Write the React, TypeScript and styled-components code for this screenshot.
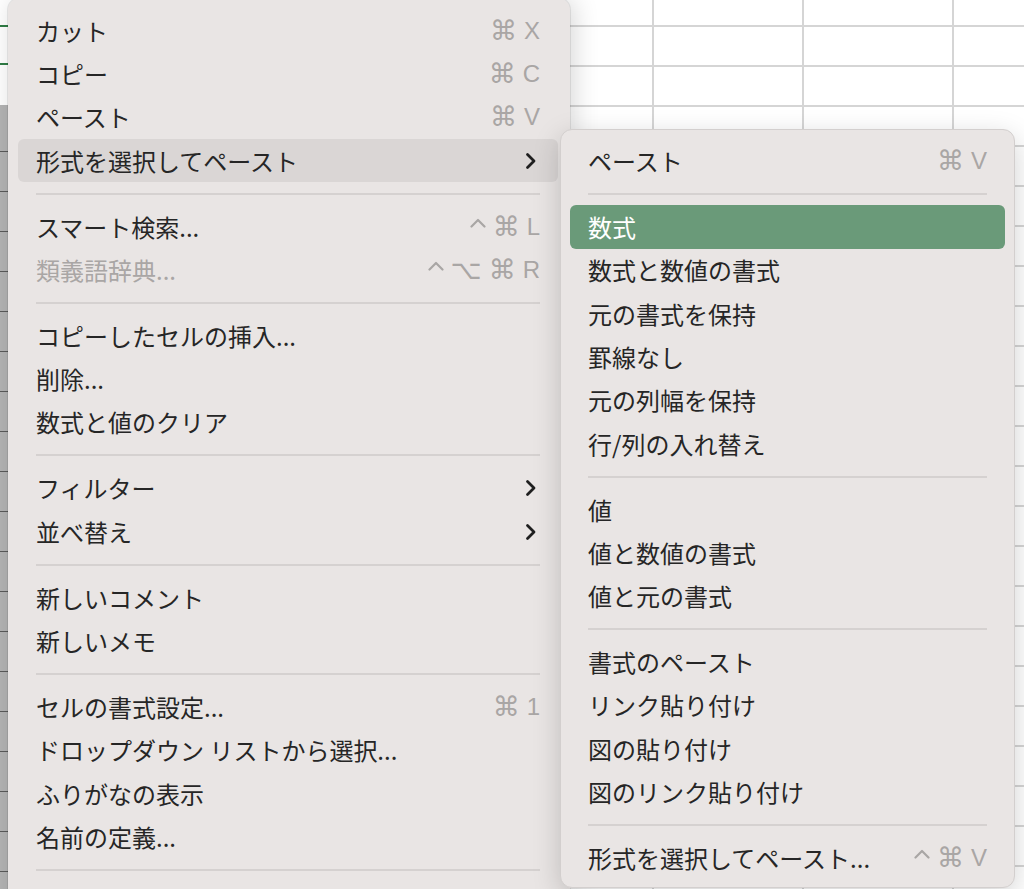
import styled, { createGlobalStyle } from "styled-components";

const GlobalStyle = createGlobalStyle`
  html, body {
    margin: 0;
    padding: 0;
    overflow: hidden;
    background: #ffffff;
  }
`;

const Page = styled.div`
  position: relative;
  width: 1024px;
  height: 889px;
  overflow: hidden;
  font-family: "Noto Sans CJK JP", "Noto Sans", sans-serif;
`;

const Sheet = styled.div`
  display: flex;
  width: 100%;
  height: 100%;
`;

const LeftColumn = styled.div`
  width: 8px;
  flex: none;
  display: flex;
  flex-direction: column;
`;

const LeftTop = styled.div`
  height: 105px;
  background:
    linear-gradient(#ffffff 0 25px, #2f7d45 25px 27px, #ffffff 27px 63px, #2f7d45 63px 65px, #ffffff 65px);
`;

const LeftBody = styled.div`
  flex: 1;
  background-color: #b4b4b4;
  background-image: repeating-linear-gradient(
    to bottom,
    transparent 0 38px,
    #5a5a5a 38px 39px,
    transparent 39px 40px
  );
  background-position: 0 8px;
`;

const Grid = styled.div`
  flex: 1;
  background-color: #ffffff;
  background-image:
    linear-gradient(to right, #d5d5d5 0 2px, transparent 2px),
    linear-gradient(to bottom, #d5d5d5 0 2px, transparent 2px);
  background-size: 150px 100%, 100% 40px;
  background-position: 644px 0, 0 25px;
`;

const Menu = styled.div`
  position: absolute;
  left: 8px;
  top: -2px;
  width: 562px;
  height: 920px;
  box-sizing: border-box;
  padding: 11px 12px 0 10px;
  background: #e9e5e4;
  border-radius: 12px;
  box-shadow: 0 0 0 1px rgba(0, 0, 0, 0.08), 4px 0 26px rgba(0, 0, 0, 0.16);
`;

const SubMenu = styled.div`
  position: absolute;
  left: 560px;
  top: 129px;
  width: 455px;
  box-sizing: border-box;
  padding: 9.5px 9px 7px 9px;
  background: #e9e5e4;
  border-radius: 12px;
  border: 1px solid #d3cfce;
  box-shadow: 0 8px 28px rgba(0, 0, 0, 0.18);
`;

type Tone = "none" | "gray" | "green";

const Row = styled.div<{ $tone: Tone; $disabled?: boolean }>`
  display: flex;
  align-items: center;
  justify-content: space-between;
  height: 43.3px;
  padding: 0 18px;
  border-radius: 6px;
  font-size: 24px;
  line-height: 1;
  color: ${(p) =>
    p.$tone === "green" ? "#ffffff" : p.$disabled ? "#a9a6a5" : "#262626"};
  background: ${(p) =>
    p.$tone === "green" ? "#6a9a79" : p.$tone === "gray" ? "#dad6d5" : "transparent"};
`;

const Label = styled.span`
  white-space: nowrap;
`;

const Keys = styled.span`
  display: flex;
  align-items: center;
  gap: 7px;
  height: 28px;
  color: #a9a6a5;
`;

const Key = styled.span<{ $symbol?: boolean }>`
  font-family: ${(p) => (p.$symbol ? '"DejaVu Sans", sans-serif' : '"Liberation Sans", sans-serif')};
  font-size: ${(p) => (p.$symbol ? "27px" : "24px")};
  line-height: 28px;
`;

const CaretIcon = styled.svg`
  align-self: flex-start;
  margin-top: 5px;
`;

const Separator = styled.div`
  height: 22.7px;
  display: flex;
  align-items: center;
  padding: 0 18px;
  &::after {
    content: "";
    flex: 1;
    height: 2px;
    background: #d5d1d0;
  }
`;

const Chevron = () => (
  <svg width="14" height="20" viewBox="0 0 14 20" style={{ marginRight: 2 }}>
    <path
      d="M3.5 3.5 L10 10 L3.5 16.5"
      fill="none"
      stroke="#1f1f1f"
      strokeWidth="2.8"
      strokeLinecap="round"
      strokeLinejoin="round"
    />
  </svg>
);

const Caret = () => (
  <CaretIcon width="16" height="10" viewBox="0 0 16 10">
    <path
      d="M1.5 8.5 L8 2 L14.5 8.5"
      fill="none"
      stroke="#a9a6a5"
      strokeWidth="2.2"
      strokeLinecap="round"
      strokeLinejoin="round"
    />
  </CaretIcon>
);

type Item =
  | "sep"
  | {
      label: string;
      keys?: string[];
      sub?: boolean;
      tone?: Tone;
      disabled?: boolean;
    };

const mainItems: Item[] = [
  { label: "カット", keys: ["⌘", "X"] },
  { label: "コピー", keys: ["⌘", "C"] },
  { label: "ペースト", keys: ["⌘", "V"] },
  { label: "形式を選択してペースト", sub: true, tone: "gray" },
  "sep",
  { label: "スマート検索...", keys: ["⌃", "⌘", "L"] },
  { label: "類義語辞典...", keys: ["⌃", "⌥", "⌘", "R"], disabled: true },
  "sep",
  { label: "コピーしたセルの挿入..." },
  { label: "削除..." },
  { label: "数式と値のクリア" },
  "sep",
  { label: "フィルター", sub: true },
  { label: "並べ替え", sub: true },
  "sep",
  { label: "新しいコメント" },
  { label: "新しいメモ" },
  "sep",
  { label: "セルの書式設定...", keys: ["⌘", "1"] },
  { label: "ドロップダウン リストから選択..." },
  { label: "ふりがなの表示" },
  { label: "名前の定義..." },
  "sep",
  { label: "" },
];

const subItems: Item[] = [
  { label: "ペースト", keys: ["⌘", "V"] },
  "sep",
  { label: "数式", tone: "green" },
  { label: "数式と数値の書式" },
  { label: "元の書式を保持" },
  { label: "罫線なし" },
  { label: "元の列幅を保持" },
  { label: "行/列の入れ替え" },
  "sep",
  { label: "値" },
  { label: "値と数値の書式" },
  { label: "値と元の書式" },
  "sep",
  { label: "書式のペースト" },
  { label: "リンク貼り付け" },
  { label: "図の貼り付け" },
  { label: "図のリンク貼り付け" },
  "sep",
  { label: "形式を選択してペースト...", keys: ["⌃", "⌘", "V"] },
];

const isSymbol = (k: string) => ["⌘", "⌥"].includes(k);

const MenuItems = ({ items }: { items: Item[] }) => (
  <>
    {items.map((item, i) => {
      if (item === "sep") return <Separator key={i} />;
      return (
        <Row key={i} $tone={item.tone ?? "none"} $disabled={item.disabled}>
          <Label>{item.label}</Label>
          {item.keys && (
            <Keys>
              {item.keys.map((k, j) =>
                k === "⌃" ? (
                  <Caret key={j} />
                ) : (
                  <Key key={j} $symbol={isSymbol(k)}>
                    {k}
                  </Key>
                )
              )}
            </Keys>
          )}
          {item.sub && <Chevron />}
        </Row>
      );
    })}
  </>
);

export default function App() {
  return (
    <Page>
      <GlobalStyle />
      <Sheet>
        <LeftColumn>
          <LeftTop />
          <LeftBody />
        </LeftColumn>
        <Grid />
      </Sheet>
      <Menu>
        <MenuItems items={mainItems} />
      </Menu>
      <SubMenu>
        <MenuItems items={subItems} />
      </SubMenu>
    </Page>
  );
}
